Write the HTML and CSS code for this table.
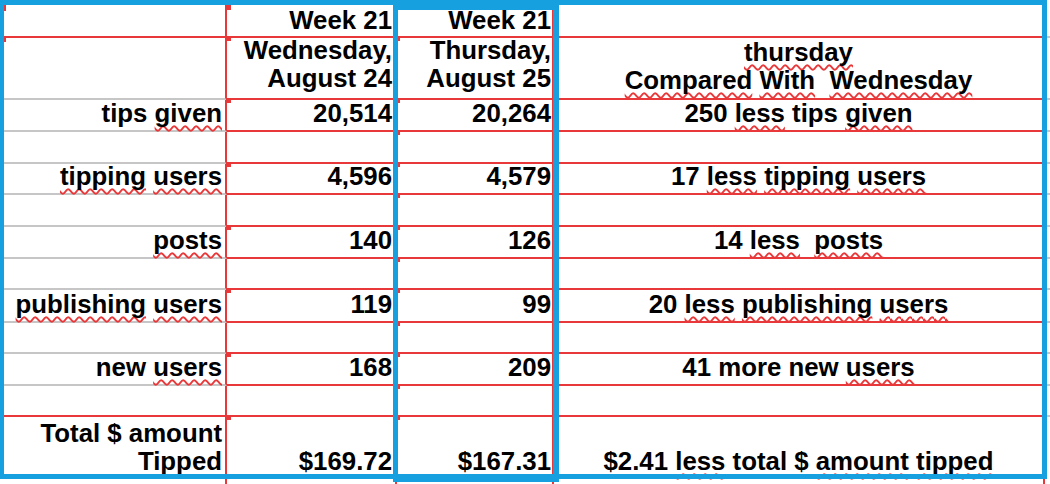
FILE: index.html
```html
<!DOCTYPE html>
<html lang="en">
<head>
<meta charset="utf-8">
<title>Week 21 comparison</title>
<link rel="stylesheet" href="styles.css">
</head>
<body>
<div class="page">
  <div class="sheet">
    <div class="row r1 redline">
      <div class="c lab"><i class="lt"></i></div>
      <div class="c wed"><i class="mk"></i><p>Week 21</p></div>
      <div class="c thu"><p>Week 21</p></div>
      <div class="c cmp"></div>
      <div class="c edge"></div>
    </div>
    <div class="row r2">
      <div class="c lab"><i class="lt"></i></div>
      <div class="c wed"><i class="mk"></i><p>Wednesday,<br>August 24</p></div>
      <div class="c thu"><i class="tk"></i><p>Thursday,<br>August 25</p></div>
      <div class="c cmp"><p><span class="sp">thursday</span><br><span class="sp">Compared</span> <span class="sp">With</span>  <span class="sp">Wednesday</span></p></div>
      <div class="c edge"></div>
    </div>
    <div class="row">
      <div class="c lab"><p>tips <span class="sp">given</span></p></div>
      <div class="c wed"><i class="mk"></i><p>20,514</p></div>
      <div class="c thu"><i class="tk"></i><p>20,264</p></div>
      <div class="c cmp"><p>250 <span class="sp">less</span> tips <span class="sp">given</span></p></div>
      <div class="c edge"></div>
    </div>
    <div class="row">
      <div class="c lab"></div>
      <div class="c wed"></div>
      <div class="c thu"><i class="tk"></i></div>
      <div class="c cmp"></div>
      <div class="c edge"></div>
    </div>
    <div class="row">
      <div class="c lab"><p><span class="sp">tipping</span> <span class="sp">users</span></p></div>
      <div class="c wed"><i class="mk"></i><p>4,596</p></div>
      <div class="c thu"><i class="tk"></i><p>4,579</p></div>
      <div class="c cmp"><p>17 <span class="sp">less</span> <span class="sp">tipping</span> <span class="sp">users</span></p></div>
      <div class="c edge"></div>
    </div>
    <div class="row">
      <div class="c lab"></div>
      <div class="c wed"></div>
      <div class="c thu"><i class="tk"></i></div>
      <div class="c cmp"></div>
      <div class="c edge"></div>
    </div>
    <div class="row">
      <div class="c lab"><p><span class="sp">posts</span></p></div>
      <div class="c wed"><i class="mk"></i><p>140</p></div>
      <div class="c thu"><i class="tk"></i><p>126</p></div>
      <div class="c cmp"><p>14 <span class="sp">less</span>  <span class="sp">posts</span></p></div>
      <div class="c edge"></div>
    </div>
    <div class="row">
      <div class="c lab"></div>
      <div class="c wed"></div>
      <div class="c thu"><i class="tk"></i></div>
      <div class="c cmp"></div>
      <div class="c edge"></div>
    </div>
    <div class="row">
      <div class="c lab"><p><span class="sp">publishing</span> <span class="sp">users</span></p></div>
      <div class="c wed"><i class="mk"></i><p>119</p></div>
      <div class="c thu"><i class="tk"></i><p>99</p></div>
      <div class="c cmp"><p>20 <span class="sp">less</span> <span class="sp">publishing</span> <span class="sp">users</span></p></div>
      <div class="c edge"></div>
    </div>
    <div class="row">
      <div class="c lab"></div>
      <div class="c wed"></div>
      <div class="c thu"><i class="tk"></i></div>
      <div class="c cmp"></div>
      <div class="c edge"></div>
    </div>
    <div class="row">
      <div class="c lab"><p>new <span class="sp">users</span></p></div>
      <div class="c wed"><i class="mk"></i><p>168</p></div>
      <div class="c thu"><i class="tk"></i><p>209</p></div>
      <div class="c cmp"><p>41 more new <span class="sp">users</span></p></div>
      <div class="c edge"></div>
    </div>
    <div class="row redline">
      <div class="c lab"></div>
      <div class="c wed"></div>
      <div class="c thu"><i class="tk"></i></div>
      <div class="c cmp"></div>
      <div class="c edge"></div>
    </div>
    <div class="row tot">
      <div class="c lab"><p>Total $ amount<br>Tipped</p></div>
      <div class="c wed"><i class="mk"></i><p>$169.72</p></div>
      <div class="c thu"><i class="tk"></i><p>$167.31</p></div>
      <div class="c cmp"><p>$2.41 <span class="sp">less</span> total $ <span class="sp">amount</span> <span class="sp">tipped</span></p></div>
      <div class="c edge"></div>
    </div>
  </div>
  <div class="frame outer"></div>
  <div class="frame thubox"></div>
</div>
</body>
</html>
```

FILE: styles.css
```css
:root {
  --red: #e8383a;
  --gray: #c6c6c6;
  --blue: #17a0df;
}

* {
  box-sizing: border-box;
  margin: 0;
  padding: 0;
}

html,
body {
  width: 1050px;
  height: 484px;
  overflow: hidden;
  background: #fff;
}

body {
  font-family: "Liberation Sans", Arial, sans-serif;
  font-weight: 700;
  font-size: 25.8px;
  line-height: 28px;
  color: #000;
}

.page {
  position: relative;
  width: 1050px;
  height: 484px;
}

.sheet {
  display: grid;
  grid-template-columns: 227px 170px 157px 491px 5px;
  grid-template-rows: 38px 62px 32px 32px 31px 32px 32px 31px 33px 31px 32px 31px 70px;
}

.row {
  display: contents;
}

.c {
  position: relative;
  display: flex;
  flex-direction: column;
  justify-content: flex-end;
  align-items: flex-end;
  text-align: right;
  white-space: pre;
  border-right: 2px solid var(--red);
  border-bottom: 2px solid var(--red);
  padding-bottom: 3px;
}

.lab {
  border-bottom-color: var(--gray);
  padding-right: 3px;
}

.row.redline .lab {
  border-bottom-color: var(--red);
}

.wed {
  padding-right: 3px;
}

.thu {
  padding-right: 1px;
}

.cmp {
  align-items: center;
  text-align: center;
}

.edge {
  border-right: none;
  border-bottom-color: var(--gray);
}

.r1 .c {
  padding-bottom: 2px;
}

.r2 .c {
  padding-bottom: 6px;
}

.r2 .cmp {
  padding-bottom: 4px;
}

.tot .c {
  padding-bottom: 10px;
}

.sp {
  text-decoration-line: underline;
  text-decoration-style: wavy;
  text-decoration-color: var(--red);
  text-decoration-thickness: 1.5px;
  text-underline-offset: 3px;
  text-decoration-skip-ink: none;
}

/* small cell indicators */
.mk {
  position: absolute;
  left: -1px;
  top: -2px;
  width: 5px;
  height: 5px;
  background: var(--red);
}

.r1 .mk {
  top: 5px;
}

.tk {
  position: absolute;
  left: 0;
  top: -2px;
  width: 3px;
  height: 5px;
  background: var(--red);
}

.lt {
  position: absolute;
  left: 4px;
  top: -2px;
  width: 2px;
  height: 6px;
  background: var(--red);
}

.r1 .lt {
  top: 5px;
}

/* blue highlight frames drawn over the sheet */
.frame {
  position: absolute;
  border: 5px solid var(--blue);
  pointer-events: none;
}

.outer {
  left: 0;
  top: 0;
  width: 1047px;
  height: 479px;
  border-left-width: 4px;
}

.thubox {
  left: 393px;
  top: 5px;
  width: 166px;
  height: 477px;
  border-right-width: 6px;
  border-bottom-width: 6px;
}
```
